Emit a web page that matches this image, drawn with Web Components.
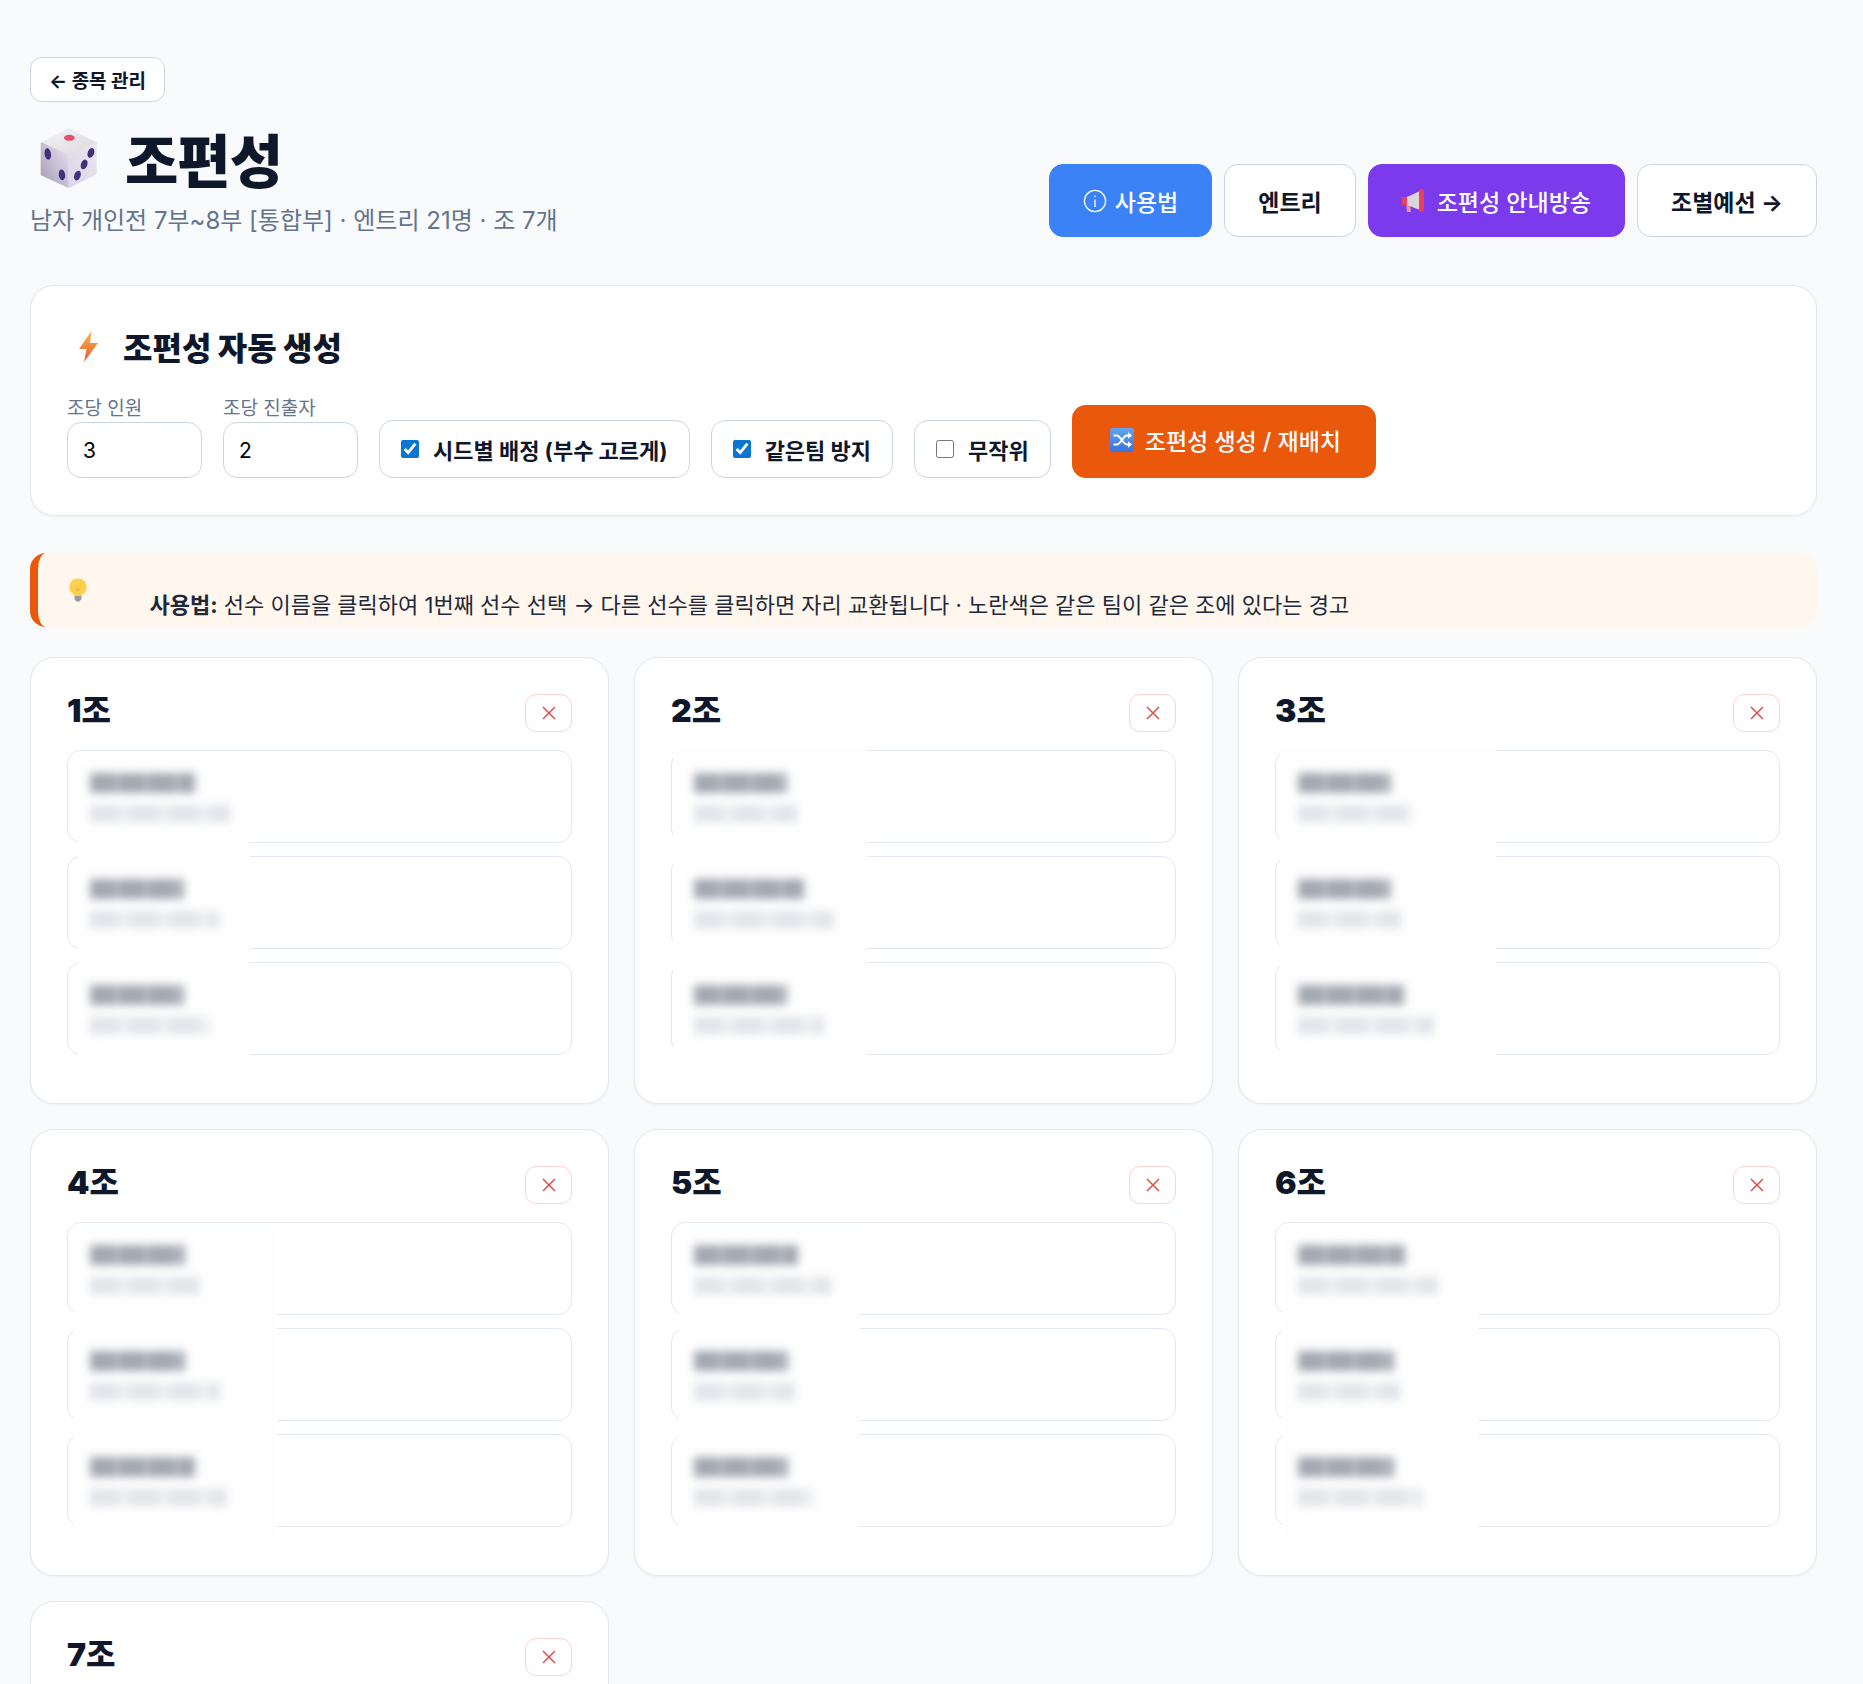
<!DOCTYPE html>
<html lang="ko">
<head>
<meta charset="utf-8">
<title>조편성</title>
<style>
    html, body { margin: 0; height: 1684px; overflow: hidden; }
    body {
        background: #f8fafc;
        color: #0f172a;
        font-family: Inter, "Noto Sans CJK KR", sans-serif;
    }
</style>
</head>
<body>

<group-page>
    <back-link slot="back">← 종목 관리</back-link>

    <page-head slot="head">
        <svg slot="icon" width="58" height="62" viewBox="60 48 172 184">
            <defs>
                <linearGradient id="diceTop" x1="0" y1="0" x2="1" y2="1">
                    <stop offset="0" stop-color="#f4f3f4"/><stop offset="1" stop-color="#dcd9dd"/>
                </linearGradient>
                <linearGradient id="diceLeft" x1="1" y1="0" x2="0" y2="1">
                    <stop offset="0" stop-color="#e6e0ee"/><stop offset="1" stop-color="#a79db6"/>
                </linearGradient>
                <linearGradient id="diceRight" x1="0" y1="1" x2="1" y2="0">
                    <stop offset="0" stop-color="#dcd4e8"/><stop offset="1" stop-color="#ebe6f1"/>
                </linearGradient>
            </defs>
            <path d="M145 56L224 96L145 132L66 96Z" fill="url(#diceTop)" stroke="url(#diceTop)" stroke-width="8" stroke-linejoin="round"/>
            <path d="M66 98L143 134V224L66 188Z" fill="url(#diceLeft)" stroke="url(#diceLeft)" stroke-width="8" stroke-linejoin="round"/>
            <path d="M147 134L224 98V186L147 224Z" fill="url(#diceRight)" stroke="url(#diceRight)" stroke-width="8" stroke-linejoin="round"/>
            <ellipse cx="147" cy="80" rx="16" ry="9" fill="#e8506e"/>
            <g fill="#43307a">
                <ellipse cx="83" cy="128" rx="9.5" ry="17" transform="rotate(-8 83 128)"/>
                <ellipse cx="125" cy="190" rx="9.5" ry="16" transform="rotate(-8 125 190)"/>
                <ellipse cx="211" cy="125" rx="9.5" ry="15" transform="rotate(20 211 125)"/>
                <ellipse cx="191" cy="159" rx="9.5" ry="15" transform="rotate(20 191 159)"/>
                <ellipse cx="171" cy="192" rx="9.5" ry="15" transform="rotate(20 171 192)"/>
            </g>
        </svg>
        <span slot="title">조편성</span>
        <span slot="sub">남자 개인전 7부~8부 [통합부] · 엔트리 21명 · 조 7개</span>
        <action-button slot="actions" tone="blue">
            <svg width="24" height="24" viewBox="0 0 24 24" fill="none" stroke="#fff" stroke-width="1.3">
                <circle cx="12" cy="12" r="10.6"/><path d="M12 10.5V18M12 6.4v1.6"/>
            </svg>
            사용법
        </action-button>
        <action-button slot="actions">엔트리</action-button>
        <action-button slot="actions" tone="purple">
            <svg width="23" height="24" viewBox="0 0 23 24">
                <path d="M4 15h4l1 8H5z" fill="#f48aa0"/>
                <rect x="0" y="8" width="6" height="8" rx="1" fill="#e8405e"/>
                <path d="M5 8L18 2V21L5 16Z" fill="#d9d6dc"/>
                <rect x="17" y="0" width="5" height="23" rx="2.4" fill="#ea3f5f"/>
            </svg>
            조편성 안내방송
        </action-button>
        <action-button slot="actions">조별예선 →</action-button>
    </page-head>

    <gen-panel slot="panel">
        <svg slot="icon" width="19" height="31" viewBox="0 0 19 31">
            <defs>
                <linearGradient id="bolt" x1="0" y1="0" x2="0" y2="1">
                    <stop offset="0" stop-color="#fdb63f"/><stop offset="1" stop-color="#e9573f"/>
                </linearGradient>
            </defs>
            <path d="M12.5 0L0 18H7.5L5 31L19 12H11Z" fill="url(#bolt)"/>
        </svg>
        <span slot="title">조편성 자동 생성</span>
        <num-field label="조당 인원" value="3"></num-field>
        <num-field label="조당 진출자" value="2"></num-field>
        <check-chip checked>시드별 배정 (부수 고르게)</check-chip>
        <check-chip checked>같은팀 방지</check-chip>
        <check-chip>무작위</check-chip>
        <run-button>
            <svg width="24" height="24" viewBox="0 0 24 24">
                <defs>
                    <linearGradient id="shuf" x1="0" y1="0" x2="0" y2="1">
                        <stop offset="0" stop-color="#62a4f2"/><stop offset="1" stop-color="#3b72db"/>
                    </linearGradient>
                </defs>
                <rect width="24" height="24" rx="3" fill="url(#shuf)"/>
                <path d="M3.5 7.5H7C10.5 7.5 13 16.5 17 16.5H19M3.5 16.5H7C10.5 16.5 13 7.5 17 7.5H19" fill="none" stroke="#fff" stroke-width="2"/>
                <path d="M18 4.2L22 7.5L18 10.8ZM18 13.2L22 16.5L18 19.8Z" fill="#fff"/>
            </svg>
            조편성 생성 / 재배치
        </run-button>
    </gen-panel>

    <hint-note slot="hint">
        <svg slot="icon" width="20" height="24" viewBox="0 0 20 24">
            <path d="M10 0.5A8.5 8.5 0 0 0 5.5 16.3L6.5 18H13.5L14.5 16.3A8.5 8.5 0 0 0 10 0.5Z" fill="#fcd14f"/>
            <path d="M6.5 18H13.5V21L11.5 23.5H8.5L6.5 21Z" fill="#9a9aa5"/>
            <path d="M7.5 9.5L10 13L12.5 9.5" fill="none" stroke="#f3a73a" stroke-width="1"/>
        </svg>
        <b>사용법:</b> 선수 이름을 클릭하여 1번째 선수 선택 → 다른 선수를 클릭하면 자리 교환됩니다 · 노란색은 같은 팀이 같은 조에 있다는 경고
    </hint-note>

    <group-card slot="groups" name="1조" mask="47,103,172,296">
        <player-row n="105" s="140"></player-row>
        <player-row n="94" s="129"></player-row>
        <player-row n="94" s="120"></player-row>
    </group-card>
    <group-card slot="groups" name="2조" mask="38,89,194,320">
        <player-row n="93" s="103"></player-row>
        <player-row n="110" s="140"></player-row>
        <player-row n="93" s="130"></player-row>
    </group-card>
    <group-card slot="groups" name="3조" mask="41,89,216,320">
        <player-row n="93" s="113"></player-row>
        <player-row n="93" s="103"></player-row>
        <player-row n="106" s="136"></player-row>
    </group-card>
    <group-card slot="groups" name="4조" mask="42,95,204,315">
        <player-row n="95" s="110"></player-row>
        <player-row n="95" s="130"></player-row>
        <player-row n="105" s="137"></player-row>
    </group-card>
    <group-card slot="groups" name="5조" mask="44,99,181,308">
        <player-row n="104" s="137"></player-row>
        <player-row n="94" s="101"></player-row>
        <player-row n="94" s="120"></player-row>
    </group-card>
    <group-card slot="groups" name="6조" mask="43,109,197,298">
        <player-row n="107" s="140"></player-row>
        <player-row n="96" s="102"></player-row>
        <player-row n="96" s="124"></player-row>
    </group-card>
    <group-card slot="groups" name="7조">
        <player-row n="100" s="125"></player-row>
        <player-row n="100" s="125"></player-row>
        <player-row n="100" s="125"></player-row>
    </group-card>
</group-page>

<script>
    // every element below: a class with its own shadow root, markup comes from getTemplate()
    class BaseElement extends HTMLElement {
        constructor() {
            super();
            let template = document.createElement('template');
            template.innerHTML = this.getTemplate();
            this.attachShadow({mode: 'open'}).appendChild(template.content.cloneNode(true));
        }
    }

    class GroupPage extends BaseElement {
        getTemplate() {
            return `
                <style>
                    :host { display: block; padding: 57px 46px 0 30px; }
                    .groups {
                        display: grid;
                        grid-template-columns: repeat(3, 1fr);
                        gap: 25px;
                        margin-top: 30px;
                    }
                    .hint { display: block; margin-top: 37px; }
                </style>
                <slot name="back"></slot>
                <slot name="head"></slot>
                <slot name="panel"></slot>
                <div class="hint"><slot name="hint"></slot></div>
                <div class="groups"><slot name="groups"></slot></div>
            `;
        }
    }

    class BackLink extends BaseElement {
        getTemplate() {
            return `
                <style>
                    :host {
                        display: inline-flex;
                        align-items: center;
                        box-sizing: border-box;
                        height: 45px;
                        padding: 0 18px;
                        background: #fff;
                        border: 1px solid #cbd5e1;
                        border-radius: 12px;
                        font-size: 19px;
                        font-weight: 700;
                        white-space: nowrap;
                    }
                </style>
                <slot></slot>
            `;
        }
    }

    class PageHead extends BaseElement {
        getTemplate() {
            return `
                <style>
                    :host {
                        display: flex;
                        justify-content: space-between;
                        align-items: flex-end;
                        margin: 15px 0 46px;
                    }
                    .title {
                        display: flex;
                        align-items: center;
                        gap: 27px;
                        padding-left: 10px;
                        height: 82px;
                        font-size: 58px;
                        font-weight: 900;
                        letter-spacing: -1px;
                    }
                    .sub {
                        margin-top: 4px;
                        font-size: 24px;
                        line-height: 36px;
                        color: #64748b;
                    }
                    .actions { display: flex; gap: 12px; margin-bottom: 2px; }
                </style>
                <div>
                    <div class="title"><slot name="icon"></slot><slot name="title"></slot></div>
                    <div class="sub"><slot name="sub"></slot></div>
                </div>
                <div class="actions"><slot name="actions"></slot></div>
            `;
        }
    }

    class ActionButton extends BaseElement {
        getTemplate() {
            return `
                <style>
                    :host {
                        display: inline-flex;
                        align-items: center;
                        gap: 8px;
                        box-sizing: border-box;
                        height: 73px;
                        padding: 0 33px;
                        background: #fff;
                        border: 1px solid #cbd5e1;
                        border-radius: 14px;
                        font-size: 23px;
                        font-weight: 700;
                        white-space: nowrap;
                    }
                    :host([tone="blue"]) {
                        background: #3b82f6;
                        border-color: #3b82f6;
                        color: #fff;
                        font-weight: 500;
                    }
                    :host([tone="purple"]) {
                        background: #7c3aed;
                        border-color: #7c3aed;
                        color: #fff;
                        font-weight: 500;
                        gap: 12px;
                    }
                </style>
                <slot></slot>
            `;
        }
    }

    class GenPanel extends BaseElement {
        getTemplate() {
            return `
                <style>
                    :host {
                        display: block;
                        box-sizing: border-box;
                        height: 231px;
                        padding: 38px 36px 35px;
                        background: #fff;
                        border: 1px solid #e2e8f0;
                        border-radius: 24px;
                        box-shadow: 0 1px 3px rgba(15, 23, 42, .05);
                    }
                    .title {
                        display: flex;
                        align-items: center;
                        gap: 25px;
                        height: 44px;
                        padding-left: 12px;
                        font-size: 32px;
                        font-weight: 900;
                    }
                    .row {
                        display: flex;
                        align-items: flex-end;
                        gap: 21px;
                        margin-top: 29px;
                    }
                </style>
                <div class="title"><slot name="icon"></slot><slot name="title"></slot></div>
                <div class="row"><slot></slot></div>
            `;
        }
    }

    class NumField extends BaseElement {
        getTemplate() {
            return `
                <style>
                    :host { display: block; }
                    label {
                        display: block;
                        height: 25px;
                        font-size: 19px;
                        line-height: 24px;
                        color: #64748b;
                    }
                    input {
                        display: block;
                        box-sizing: border-box;
                        width: 135px;
                        height: 56px;
                        padding: 0 15px;
                        background: #fff;
                        border: 1px solid #cbd5e1;
                        border-radius: 14px;
                        font: 400 21px Inter, "Noto Sans CJK KR", sans-serif;
                        color: #000;
                        outline: none;
                    }
                </style>
                <label></label>
                <input type="number">
            `;
        }

        connectedCallback() {
            this.shadowRoot.querySelector('label').textContent = this.getAttribute('label');
            this.shadowRoot.querySelector('input').value = this.getAttribute('value');
        }
    }

    class CheckChip extends BaseElement {
        getTemplate() {
            return `
                <style>
                    :host {
                        display: inline-flex;
                        align-items: center;
                        gap: 14px;
                        box-sizing: border-box;
                        height: 58px;
                        padding: 0 21px;
                        background: #fff;
                        border: 1px solid #cbd5e1;
                        border-radius: 14px;
                        font-size: 22px;
                        font-weight: 700;
                        white-space: nowrap;
                    }
                    input {
                        width: 18px;
                        height: 18px;
                        margin: 0;
                        accent-color: #0b76d1;
                    }
                </style>
                <input type="checkbox">
                <slot></slot>
            `;
        }

        connectedCallback() {
            this.shadowRoot.querySelector('input').checked = this.hasAttribute('checked');
        }
    }

    class RunButton extends BaseElement {
        getTemplate() {
            return `
                <style>
                    :host {
                        display: inline-flex;
                        align-items: center;
                        gap: 11px;
                        box-sizing: border-box;
                        height: 73px;
                        padding: 0 35px 4px 38px;
                        background: #ea580c;
                        border-radius: 14px;
                        color: #fff;
                        font-size: 23px;
                        font-weight: 500;
                        white-space: nowrap;
                    }
                </style>
                <slot></slot>
            `;
        }
    }

    class HintNote extends BaseElement {
        getTemplate() {
            return `
                <style>
                    :host {
                        display: flex;
                        align-items: center;
                        gap: 12px;
                        box-sizing: border-box;
                        height: 74px;
                        padding-left: 30px;
                        background: #fff7ed;
                        border-left: 8px solid #ea580c;
                        border-radius: 16px;
                        font-size: 22px;
                        color: #1e293b;
                    }
                    .text { white-space: pre-wrap; }
                    ::slotted(b) { font-weight: 700; }
                </style>
                <slot name="icon"></slot>
                <div class="text"><slot></slot></div>
            `;
        }
    }

    class GroupCard extends BaseElement {
        getTemplate() {
            return `
                <style>
                    :host {
                        display: block;
                        position: relative;
                        box-sizing: border-box;
                        height: 447px;
                        padding: 36px 36px 48px;
                        background: #fff;
                        border: 1px solid #e2e8f0;
                        border-radius: 24px;
                        box-shadow: 0 1px 3px rgba(15, 23, 42, .05);
                    }
                    header {
                        display: flex;
                        justify-content: space-between;
                        align-items: flex-start;
                        margin-bottom: 18px;
                    }
                    h2 {
                        margin: 0;
                        font-size: 32px;
                        line-height: 34px;
                        font-weight: 900;
                    }
                    button {
                        display: grid;
                        place-items: center;
                        box-sizing: border-box;
                        width: 47px;
                        height: 38px;
                        padding: 0;
                        background: #fff;
                        border: 1px solid #fad4d4;
                        border-radius: 11px;
                    }
                    .rows { display: flex; flex-direction: column; gap: 13px; }
                    /* privacy cover sitting over the names, its edges cut the row borders */
                    .mask { position: absolute; z-index: 1; background: #fefefe; }
                </style>
                <header>
                    <h2></h2>
                    <button>
                        <svg width="14" height="14" viewBox="0 0 14 14" stroke="#dc4f4f" stroke-width="1.5" fill="none">
                            <path d="M1 1L13 13M13 1L1 13"/>
                        </svg>
                    </button>
                </header>
                <div class="rows"><slot></slot></div>
                <div class="mask"></div>
            `;
        }

        connectedCallback() {
            this.shadowRoot.querySelector('h2').textContent = this.getAttribute('name');
            let mask = this.shadowRoot.querySelector('.mask');
            let box = this.getAttribute('mask');
            if (!box) {
                mask.remove();
                return;
            }
            let [left, top, width, height] = box.split(',');
            mask.style.cssText = `left:${left}px;top:${top}px;width:${width}px;height:${height}px`;
        }
    }

    class PlayerRow extends BaseElement {
        getTemplate() {
            return `
                <style>
                    :host {
                        display: block;
                        box-sizing: border-box;
                        height: 93px;
                        padding: 22px 0 0 22px;
                        background: #fff;
                        border: 1px solid #e2e8f0;
                        border-radius: 14px;
                    }
                    .name, .info { position: relative; z-index: 2; filter: blur(4px); }
                    .name {
                        height: 20px;
                        background: repeating-linear-gradient(90deg, #a3a8b1 0 24px, #b4b8c0 24px 30px);
                    }
                    .info {
                        height: 17px;
                        margin-top: 12px;
                        background: repeating-linear-gradient(90deg, #e1e4e9 0 28px, #eceef1 28px 40px);
                    }
                </style>
                <div class="name"></div>
                <div class="info"></div>
            `;
        }

        connectedCallback() {
            this.shadowRoot.querySelector('.name').style.width = this.getAttribute('n') + 'px';
            this.shadowRoot.querySelector('.info').style.width = this.getAttribute('s') + 'px';
        }
    }

    window.customElements.define('group-page', GroupPage);
    window.customElements.define('back-link', BackLink);
    window.customElements.define('page-head', PageHead);
    window.customElements.define('action-button', ActionButton);
    window.customElements.define('gen-panel', GenPanel);
    window.customElements.define('num-field', NumField);
    window.customElements.define('check-chip', CheckChip);
    window.customElements.define('run-button', RunButton);
    window.customElements.define('hint-note', HintNote);
    window.customElements.define('group-card', GroupCard);
    window.customElements.define('player-row', PlayerRow);
</script>
</body>
</html>
